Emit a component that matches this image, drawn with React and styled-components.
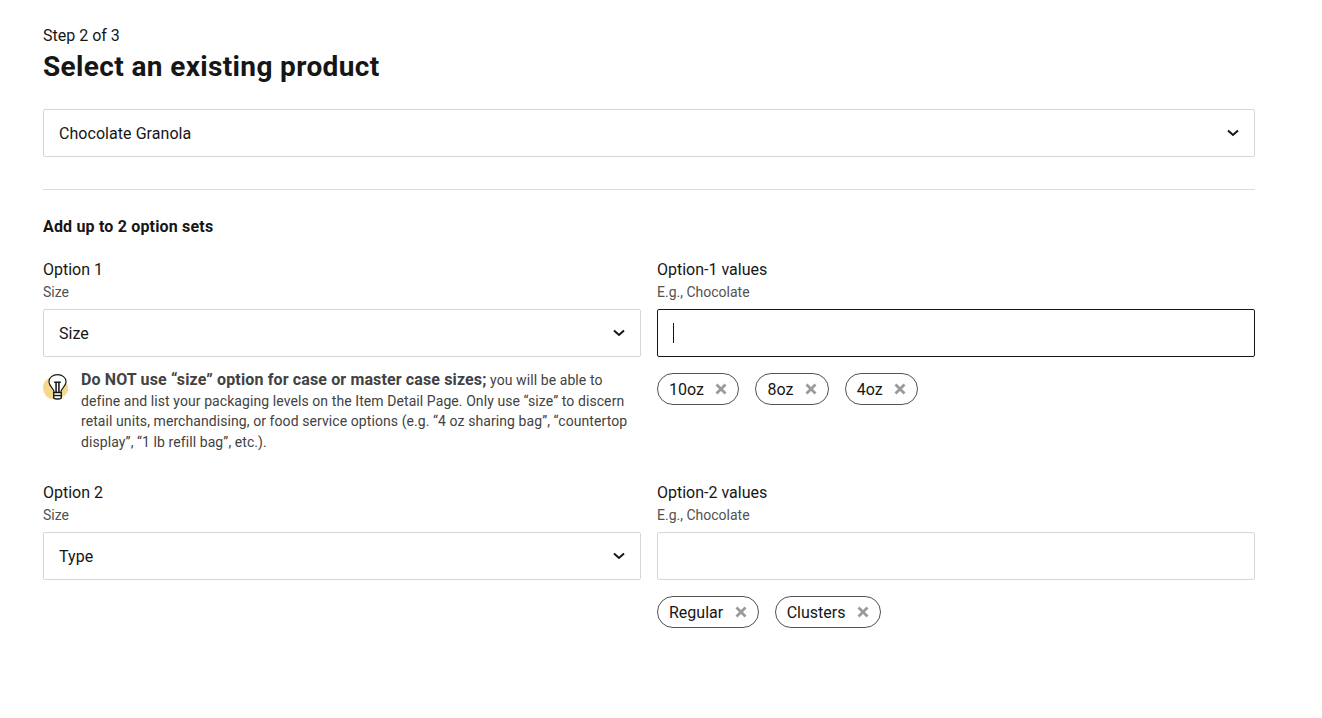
import React from 'react';
import styled, { createGlobalStyle } from 'styled-components';

const GlobalStyle = createGlobalStyle`
  body {
    margin: 0;
    background: #fff;
    color: #161616;
    font-family: 'Roboto', 'Liberation Sans', sans-serif;
  }
`;

const App = () => {
  return (
    <>
      <GlobalStyle />
      <Page>
        <Step>Step 2 of 3</Step>
        <Title>Select an existing product</Title>
        <SelectBox>
          <span>Chocolate Granola</span>
          <Chevron />
        </SelectBox>
        <Divider />
        <SectionTitle>Add up to 2 option sets</SectionTitle>
        <OptionGrid>
          <Field>
            <Label>Option 1</Label>
            <Hint>Size</Hint>
            <SelectBox>
              <span>Size</span>
              <Chevron />
            </SelectBox>
            <Tip>
              <BulbIcon />
              <TipText>
                <strong>Do NOT use “size” option for case or master case sizes;</strong> you will be able to
                define and list your packaging levels on the Item Detail Page. Only use “size” to discern
                retail units, merchandising, or food service options (e.g. “4 oz sharing bag”, “countertop
                display”, “1 lb refill bag”, etc.).
              </TipText>
            </Tip>
          </Field>
          <Field>
            <Label>Option-1 values</Label>
            <Hint>E.g., Chocolate</Hint>
            <InputBox $focused>
              <Caret />
            </InputBox>
            <TagRow>
              {['10oz', '8oz', '4oz'].map((tag) => (
                <Tag key={tag}>
                  {tag}
                  <CloseIcon />
                </Tag>
              ))}
            </TagRow>
          </Field>
          <Field>
            <Label>Option 2</Label>
            <Hint>Size</Hint>
            <SelectBox>
              <span>Type</span>
              <Chevron />
            </SelectBox>
          </Field>
          <Field>
            <Label>Option-2 values</Label>
            <Hint>E.g., Chocolate</Hint>
            <InputBox />
            <TagRow>
              {['Regular', 'Clusters'].map((tag) => (
                <Tag key={tag}>
                  {tag}
                  <CloseIcon />
                </Tag>
              ))}
            </TagRow>
          </Field>
        </OptionGrid>
      </Page>
    </>
  );
};

const Chevron = () => (
  <svg width="12" height="8" viewBox="0 0 12 8" fill="none">
    <path d="M1 1.5L6 6L11 1.5" stroke="#161616" strokeWidth="2" />
  </svg>
);

const CloseIcon = () => (
  <CloseSvg width="12" height="12" viewBox="0 0 12 12" fill="none">
    <path d="M1.5 1.5L10.5 10.5M10.5 1.5L1.5 10.5" stroke="#9a9a9a" strokeWidth="2.8" />
  </CloseSvg>
);

const BulbIcon = () => (
  <BulbWrap>
    <BulbBlob />
    <BulbSvg width="19" height="28" viewBox="0 0 20 28" fill="none">
      <path
        d="M6.5 19.5C6.5 15.5 1 13.5 1 8.5C1 4 5 1 10 1C15 1 19 4 19 8.5C19 13.5 13.5 15.5 13.5 19.5Z"
        fill="#fff"
        stroke="#161616"
        strokeWidth="1.2"
      />
      <path d="M6.5 9H13.5M8.5 9V19.5M11.5 9V19.5" stroke="#161616" strokeWidth="1.6" />
      <path d="M6 20H14V25.5C12.5 27 7.5 27 6 25.5Z" fill="#fff" stroke="#161616" strokeWidth="1.4" />
      <path d="M6 23H14" stroke="#161616" strokeWidth="1.4" />
    </BulbSvg>
  </BulbWrap>
);

const Page = styled.div`
  width: 1212px;
  padding: 27px 0 0 43px;
`;

const Step = styled.div`
  font-size: 16px;
  line-height: 18px;
`;

const Title = styled.h1`
  margin: 4px 0 24px;
  font-size: 28px;
  line-height: 36px;
  font-weight: 700;
  letter-spacing: 0.36px;
`;

const SelectBox = styled.div`
  height: 48px;
  box-sizing: border-box;
  display: flex;
  align-items: center;
  justify-content: space-between;
  padding: 0 15px;
  border: 1px solid #d6d6d6;
  border-radius: 2px;
  font-size: 16px;
  letter-spacing: 0.05px;
`;

const Divider = styled.div`
  height: 1px;
  margin: 32px 0 28px;
  background: #dcdcdc;
`;

const SectionTitle = styled.div`
  font-size: 16px;
  line-height: 18px;
  font-weight: 700;
  letter-spacing: 0.18px;
  margin-bottom: 24px;
`;

const OptionGrid = styled.div`
  display: grid;
  grid-template-columns: 598px 598px;
  column-gap: 16px;
  row-gap: 31px;
`;

const Field = styled.div`
  display: flex;
  flex-direction: column;
`;

const Label = styled.div`
  font-size: 16px;
  line-height: 20px;
`;

const Hint = styled.div`
  font-size: 14px;
  line-height: 18px;
  margin: 3px 0 8px;
  color: #525252;
`;

const InputBox = styled.div`
  height: 48px;
  box-sizing: border-box;
  display: flex;
  align-items: center;
  padding: 0 15px;
  border: 1px solid ${(props) => (props.$focused ? '#161616' : '#d6d6d6')};
  border-radius: 2px;
`;

const Caret = styled.div`
  width: 1px;
  height: 20px;
  background: #161616;
`;

const Tip = styled.div`
  display: flex;
  margin-top: 13px;
`;

const BulbWrap = styled.div`
  position: relative;
  flex: none;
  width: 38px;
  height: 32px;
`;

const BulbBlob = styled.div`
  position: absolute;
  left: 0;
  top: 7px;
  width: 25px;
  height: 22px;
  border-radius: 45% 55% 60% 40% / 50% 50% 45% 55%;
  background: #f5d98b;
`;

const BulbSvg = styled.svg`
  position: absolute;
  left: 5px;
  top: 3px;
`;

const TipText = styled.div`
  width: 552px;
  font-size: 14px;
  line-height: 20.5px;
  letter-spacing: 0.08px;
  color: #424242;
  strong {
    font-size: 16px;
    font-weight: 700;
    letter-spacing: 0.13px;
  }
`;

const TagRow = styled.div`
  display: flex;
  gap: 16px;
  margin-top: 16px;
`;

const Tag = styled.div`
  height: 32px;
  box-sizing: border-box;
  display: flex;
  align-items: center;
  gap: 11.5px;
  padding: 0 11px;
  border: 1px solid #525252;
  border-radius: 16px;
  font-size: 16px;
`;

const CloseSvg = styled.svg`
  flex: none;
`;

export default App;
